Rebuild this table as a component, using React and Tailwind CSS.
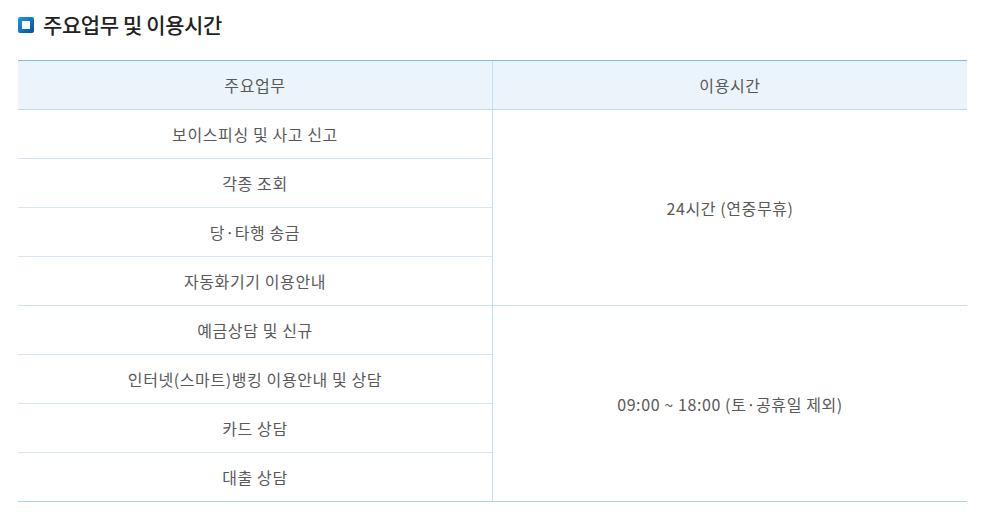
import React from 'react';

const groups = [
  {
    time: '24시간 (연중무휴)',
    items: ['보이스피싱 및 사고 신고', '각종 조회', '당·타행 송금', '자동화기기 이용안내'],
  },
  {
    time: '09:00 ~ 18:00 (토·공휴일 제외)',
    items: ['예금상담 및 신규', '인터넷(스마트)뱅킹 이용안내 및 상담', '카드 상담', '대출 상담'],
  },
];

const App = () => {
  return (
    <div
      className="min-h-screen bg-white pl-[18px] pr-[35px] pt-[12px]"
      style={{ fontFamily: '"Noto Sans CJK KR", "Noto Sans", sans-serif' }}
    >
      {/* Title */}
      <h2 className="flex items-center gap-[9px] h-[26px] text-[21px] font-medium text-[#222] tracking-[-0.4px]">
        <span className="w-[16px] h-[16px] rounded-[2px] bg-gradient-to-br from-[#1f9ce0] to-[#0a4fa0] flex items-center justify-center">
          <span className="w-[8px] h-[8px] bg-white" />
        </span>
        주요업무 및 이용시간
      </h2>

      {/* Table */}
      <div className="mt-[22px] border-t border-t-[#7dbbe6] border-b border-b-[#a9d0ec] text-[16px] tracking-[0.6px] text-[#595959]">
        <div className="grid grid-cols-[475px_1fr] h-[49px] bg-[#ebf3fb] border-b border-b-[#bcd9ef]">
          <div className="flex items-center justify-center border-r border-r-[#c6dff2]">주요업무</div>
          <div className="flex items-center justify-center">이용시간</div>
        </div>
        {groups.map((g, gi) => (
          <div
            key={gi}
            className={`grid grid-cols-[475px_1fr] ${gi > 0 ? 'border-t border-t-[#cfe2f2]' : ''}`}
          >
            <div className="border-r border-r-[#c6dff2]">
              {g.items.map((item, i) => (
                <div
                  key={i}
                  className={`flex items-center justify-center ${i > 0 ? 'h-[49px] border-t border-t-[#d6e6f3]' : 'h-[48px]'}`}
                >
                  {item}
                </div>
              ))}
            </div>
            <div className="flex items-center justify-center">{g.time}</div>
          </div>
        ))}
      </div>
    </div>
  );
};

export default App;
